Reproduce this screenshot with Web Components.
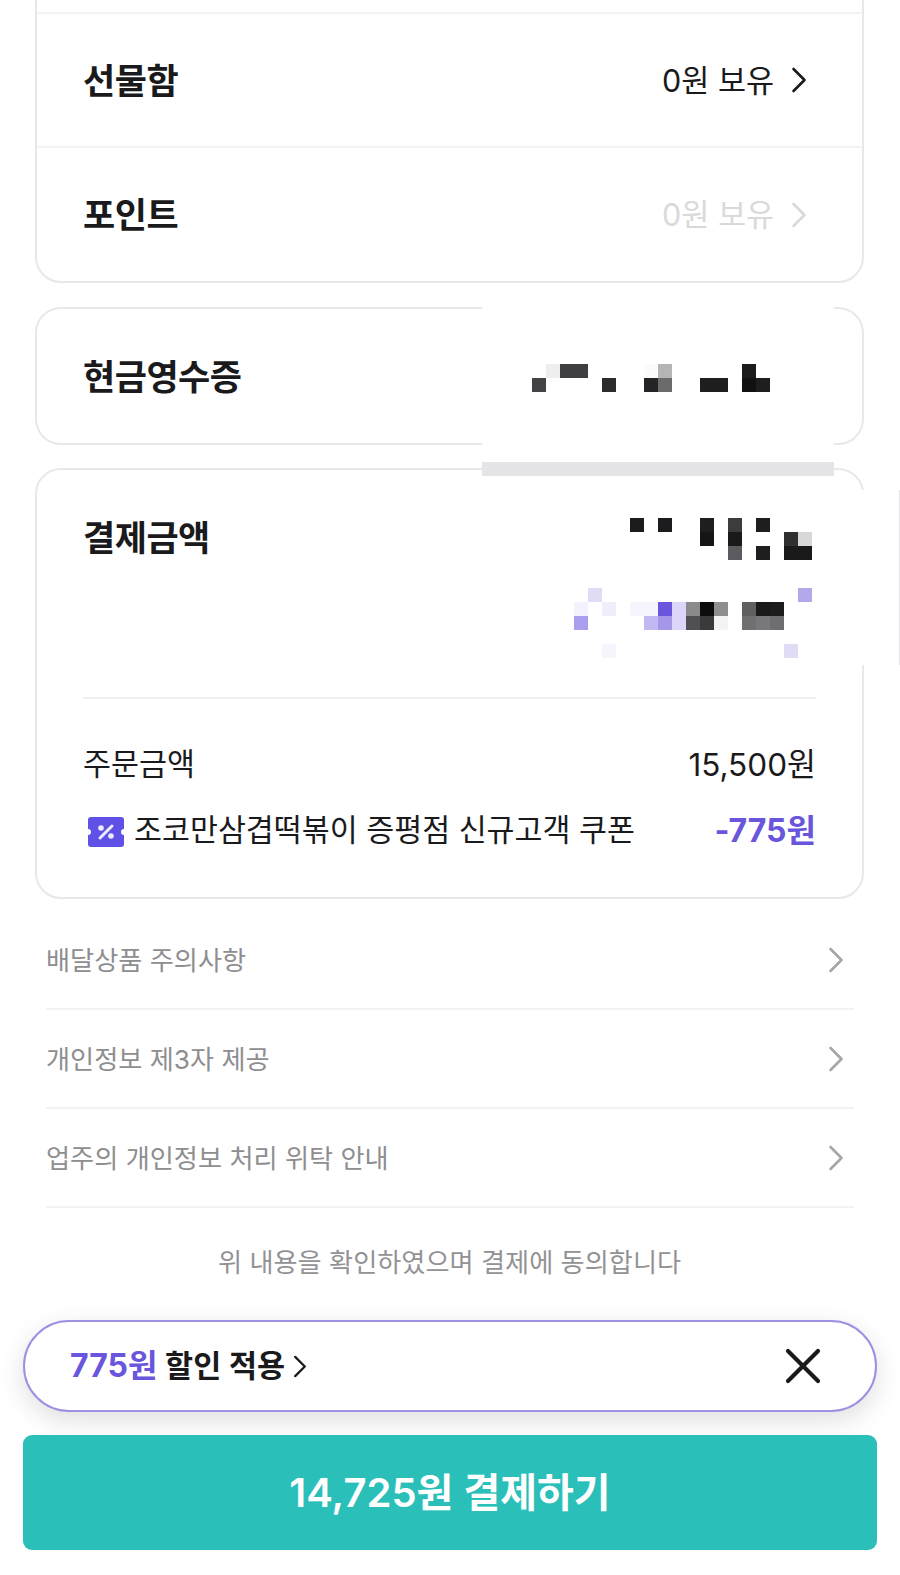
<!doctype html>
<html lang="ko">
<head>
<meta charset="utf-8">
<title>결제</title>
<style>
  html, body { margin: 0; background: #fff; }
  body {
    width: 900px;
    height: 1575px;
    overflow: hidden;
    position: relative;
    font-family: Inter, "Noto Sans CJK KR", sans-serif;
    color: #1a1a1c;
  }
</style>
</head>
<body>
<checkout-page>
  <pay-card style="margin-top:-60px">
    <pay-row style="height:70px"></pay-row>
    <pay-row label="선물함" value="0원 보유" divided></pay-row>
    <pay-row label="포인트" value="0원 보유" divided muted style="height:135px"></pay-row>
  </pay-card>
  <pay-card style="margin-top:24px">
    <pay-row label="현금영수증"></pay-row>
  </pay-card>
  <pay-card style="margin-top:23px">
    <pay-total>
      <price-line label="주문금액" amount="15,500원"></price-line>
      <price-line label="조코만삼겹떡볶이 증평점 신규고객 쿠폰" amount="-775원" coupon></price-line>
    </pay-total>
  </pay-card>
  <terms-list>
    <terms-row>배달상품 주의사항</terms-row>
    <terms-row>개인정보 제3자 제공</terms-row>
    <terms-row>업주의 개인정보 처리 위탁 안내</terms-row>
  </terms-list>
  <agree-note>위 내용을 확인하였으며 결제에 동의합니다</agree-note>
</checkout-page>

<!-- pixelated patches that hide private data in the source picture -->
<mosaic-patch left="482" top="300" width="352" height="162"
  origin-x="532" origin-y="364"
  cells="1,0,#eee 2,0,#3f3f41 3,0,#3f3f41 8,0,#fbfbfb 9,0,#b5b5b5 15,0,#1c1c1e 0,1,#444446 5,1,#2c2c2c 8,1,#242426 9,1,#6b6b6b 12,1,#1e1e1e 13,1,#1e1e1e 15,1,#111 16,1,#1e1e1e"></mosaic-patch>
<cover-bar></cover-bar>
<mosaic-patch left="560" top="490" width="339" height="175" edge
  origin-x="560" origin-y="518"
  cells="5,0,#1c1c1f 7,0,#1c1c1f 10,0,#1e1e1e 12,0,#3c3c3f 14,0,#1e1e1e 10,1,#151515 12,1,#1a1a1a 16,1,#303030 17,1,#d8d8d8 12,2,#5c5c60 14,2,#1e1e1e 16,2,#1a1a1a 17,2,#1a1a1a 2,5,#e0dcf6 17,5,#b3a8ea 1,6,#f4f2fc 3,6,#f0eefb 5,6,#f6f5fd 6,6,#f6f5fd 7,6,#6a55dd 8,6,#ddd6fa 9,6,#8a8a8a 10,6,#0d0d0d 11,6,#8f8f8f 13,6,#606060 14,6,#1a1a1a 15,6,#1c1c1c 1,7,#a99ef0 6,7,#c2b8f2 7,7,#a596e8 8,7,#ddd6fa 9,7,#505052 10,7,#3a3a3c 11,7,#f3f3f3 13,7,#707072 14,7,#78787a 15,7,#6e6e70 3,9,#f6f5fd 16,9,#e0dcf6"></mosaic-patch>

<discount-pill amount="775원" text="할인 적용"></discount-pill>
<pay-button>14,725원 결제하기</pay-button>

<script>
const chevron = (color, w, h, sw) => `
  <svg width="${w}" height="${h}" viewBox="0 0 16 26" fill="none" style="display:block;flex:none">
    <path d="M2.5 2 L13.5 13 L2.5 24" stroke="${color}" stroke-width="${sw}" stroke-linecap="round" stroke-linejoin="round"/>
  </svg>`;

class CheckoutPage extends HTMLElement {
  constructor() {
    super();
    this.attachShadow({ mode: "open" });
    this.shadowRoot.innerHTML = `
      <style>
        :host { display: flex; flex-direction: column; padding: 0 36px 0 35px; }
      </style>
      <slot></slot>
    `;
  }
}

class PayCard extends HTMLElement {
  constructor() {
    super();
    this.attachShadow({ mode: "open" });
    this.shadowRoot.innerHTML = `
      <style>
        :host {
          display: block;
          box-sizing: border-box;
          border: 2px solid #e8e8ea;
          border-radius: 26px;
          background: #fff;
        }
      </style>
      <slot></slot>
    `;
  }
}

class PayRow extends HTMLElement {
  constructor() {
    super();
    this.attachShadow({ mode: "open" });
  }

  connectedCallback() {
    const label = this.getAttribute("label") || "";
    const value = this.getAttribute("value");
    const color = this.hasAttribute("muted") ? "#d9d9db" : "#1a1a1c";
    this.shadowRoot.innerHTML = `
      <style>
        :host {
          display: flex;
          align-items: center;
          justify-content: space-between;
          box-sizing: border-box;
          height: 134px;
          padding: 0 55px 0 46px;
        }
        :host([divided]) { border-top: 2px solid #f3f3f4; }
        .label { font-size: 35px; font-weight: 700; letter-spacing: -0.5px; margin-bottom: 4px; }
        .right { display: flex; align-items: center; gap: 17px; color: ${color}; }
        .value { font-size: 30.5px; margin-bottom: 3px; }
      </style>
      <span class="label">${label}</span>
      ${value ? `<span class="right"><span class="value">${value}</span>${chevron(color, 16, 26, 2.6)}</span>` : ""}
    `;
  }
}

class PayTotal extends HTMLElement {
  constructor() {
    super();
    this.attachShadow({ mode: "open" });
    this.shadowRoot.innerHTML = `
      <style>
        :host { display: block; padding: 0 46px; height: 427px; box-sizing: border-box; }
        .head {
          height: 229px;
          box-sizing: border-box;
          padding-top: 43px;
          border-bottom: 2px solid #f0f0f1;
          font-size: 35px;
          font-weight: 700;
          line-height: 50px;
          letter-spacing: -0.5px;
        }
        .lines { display: flex; flex-direction: column; gap: 22px; padding-top: 42px; }
      </style>
      <div class="head">결제금액</div>
      <div class="lines"><slot></slot></div>
    `;
  }
}

class PriceLine extends HTMLElement {
  constructor() {
    super();
    this.attachShadow({ mode: "open" });
  }

  connectedCallback() {
    const coupon = this.hasAttribute("coupon");
    this.shadowRoot.innerHTML = `
      <style>
        :host {
          display: flex;
          align-items: center;
          justify-content: space-between;
          height: 44px;
          font-size: 30.4px;
        }
        .label { display: flex; align-items: center; gap: 10px; }
        .label span { margin-bottom: 2px; }
        .amount { font-size: 31.5px; margin-bottom: 2px; }
        :host([coupon]) .amount { color: #6a55dd; font-weight: 700; font-size: 32px; }
        svg { display: block; flex: none; margin: 5px 0 0 5px; }
      </style>
      <span class="label">
        ${coupon ? `<svg width="36" height="30" viewBox="0 0 36 30">
          <path fill="#5f50e6" d="M3 0H33a3 3 0 0 1 3 3V12a3 3 0 0 0 0 6V27a3 3 0 0 1-3 3H3a3 3 0 0 1-3-3V18a3 3 0 0 0 0-6V3a3 3 0 0 1 3-3Z"/>
          <path stroke="#ecebfb" stroke-width="3" stroke-linecap="round" d="M24 9 L12 21"/>
          <circle cx="13" cy="11" r="2.8" fill="#ecebfb"/><circle cx="23" cy="19" r="2.8" fill="#ecebfb"/>
        </svg>` : ""}
        <span>${this.getAttribute("label")}</span>
      </span>
      <span class="amount">${this.getAttribute("amount")}</span>
    `;
  }
}

class TermsList extends HTMLElement {
  constructor() {
    super();
    this.attachShadow({ mode: "open" });
    this.shadowRoot.innerHTML = `
      <style>
        :host { display: block; padding: 12px 10px 0 11px; }
      </style>
      <slot></slot>
    `;
  }
}

class TermsRow extends HTMLElement {
  constructor() {
    super();
    this.attachShadow({ mode: "open" });
    this.shadowRoot.innerHTML = `
      <style>
        :host {
          display: flex;
          align-items: center;
          justify-content: space-between;
          box-sizing: border-box;
          height: 99px;
          padding-right: 10px;
          border-bottom: 2px solid #f2f2f3;
          color: #8e8e90;
          font-size: 26.2px;
        }
        .text { margin-bottom: 2px; }
      </style>
      <span class="text"><slot></slot></span>
      ${chevron("#a6a6a8", 16, 26, 2.6)}
    `;
  }
}

class AgreeNote extends HTMLElement {
  constructor() {
    super();
    this.attachShadow({ mode: "open" });
    this.shadowRoot.innerHTML = `
      <style>
        :host {
          display: block;
          margin-top: 35px;
          text-align: center;
          color: #929294;
          font-size: 26.2px;
          line-height: 40px;
        }
      </style>
      <slot></slot>
    `;
  }
}

class CoverBar extends HTMLElement {
  constructor() {
    super();
    this.attachShadow({ mode: "open" });
    this.shadowRoot.innerHTML = `
      <style>
        :host { position: absolute; left: 482px; top: 462px; width: 352px; height: 14px; background: #e5e5e7; }
      </style>
    `;
  }
}

class MosaicPatch extends HTMLElement {
  constructor() {
    super();
    this.attachShadow({ mode: "open" });
  }

  connectedCallback() {
    const num = (name) => Number(this.getAttribute(name));
    const left = num("left");
    const top = num("top");
    const cells = this.getAttribute("cells").trim().split(/\s+/).map((c) => {
      const [col, row, color] = c.split(",");
      return `<i style="grid-column:${+col + 1};grid-row:${+row + 1};background:${color}"></i>`;
    });
    this.shadowRoot.innerHTML = `
      <style>
        :host {
          position: absolute;
          left: ${left}px;
          top: ${top}px;
          width: ${num("width")}px;
          height: ${num("height")}px;
          background: #fff;
        }
        :host([edge]) { border-right: 1px solid #e4e4e6; }
        .grid {
          position: absolute;
          left: ${num("origin-x") - left}px;
          top: ${num("origin-y") - top}px;
          display: grid;
          grid-auto-columns: 14px;
          grid-auto-rows: 14px;
        }
      </style>
      <div class="grid">${cells.join("")}</div>
    `;
  }
}

class DiscountPill extends HTMLElement {
  constructor() {
    super();
    this.attachShadow({ mode: "open" });
  }

  connectedCallback() {
    this.shadowRoot.innerHTML = `
      <style>
        :host {
          position: absolute;
          left: 23px;
          top: 1320px;
          width: 854px;
          height: 92px;
          box-sizing: border-box;
          display: flex;
          align-items: center;
          justify-content: space-between;
          padding: 0 54px 0 45px;
          background: #fff;
          border: 2px solid #a08fe2;
          border-radius: 46px;
          box-shadow: 0 8px 26px rgba(0, 0, 0, 0.13);
          font-size: 30.5px;
          font-weight: 600;
        }
        .text { display: flex; align-items: center; gap: 8px; }
        .copy { margin-bottom: 6px; }
        b { color: #6a55dd; font-weight: 700; font-size: 32px; }
      </style>
      <span class="text"><span class="copy"><b>${this.getAttribute("amount")}</b> ${this.getAttribute("text")}</span>${chevron("#1a1a1c", 14, 23, 2.6)}</span>
      <svg width="36" height="36" viewBox="0 0 36 36" fill="none" style="display:block">
        <path d="M3 3 L33 33 M33 3 L3 33" stroke="#1a1a1c" stroke-width="4.2" stroke-linecap="round"/>
      </svg>
    `;
  }
}

class PayButton extends HTMLElement {
  constructor() {
    super();
    this.attachShadow({ mode: "open" });
    this.shadowRoot.innerHTML = `
      <style>
        :host {
          position: absolute;
          left: 23px;
          top: 1435px;
          width: 854px;
          height: 115px;
          box-sizing: border-box;
          padding-bottom: 5px;
          display: flex;
          align-items: center;
          justify-content: center;
          border-radius: 9px;
          background: #2abfb9;
          color: #fff;
          font-size: 40px;
          font-weight: 600;
        }
      </style>
      <slot></slot>
    `;
  }
}

customElements.define("checkout-page", CheckoutPage);
customElements.define("pay-card", PayCard);
customElements.define("pay-row", PayRow);
customElements.define("pay-total", PayTotal);
customElements.define("price-line", PriceLine);
customElements.define("terms-list", TermsList);
customElements.define("terms-row", TermsRow);
customElements.define("agree-note", AgreeNote);
customElements.define("cover-bar", CoverBar);
customElements.define("mosaic-patch", MosaicPatch);
customElements.define("discount-pill", DiscountPill);
customElements.define("pay-button", PayButton);
</script>
</body>
</html>
